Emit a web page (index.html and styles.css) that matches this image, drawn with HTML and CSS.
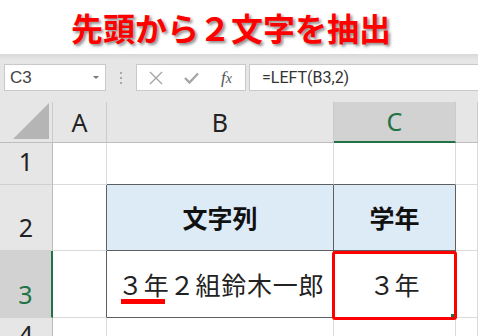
FILE: index.html
```html
<!DOCTYPE html>
<html lang="ja">
<head>
    <meta charset="UTF-8">
    <meta name="viewport" content="width=device-width, initial-scale=1.0">
    <title>先頭から２文字を抽出</title>
    <link rel="stylesheet" href="styles.css">
</head>
<body>
    <h1 class="title">先頭から２文字を抽出</h1>

    <div class="formula-bar">
        <div class="name-box">
            <span>C3</span>
            <span class="arrow"></span>
        </div>
        <div class="grip">
            <svg width="4" height="14" viewBox="0 0 4 14">
                <rect x="1" y="1" width="2" height="2" fill="#a8a8a8"/>
                <rect x="1" y="6" width="2" height="2" fill="#a8a8a8"/>
                <rect x="1" y="11" width="2" height="2" fill="#a8a8a8"/>
            </svg>
        </div>
        <div class="fx-box">
            <svg class="icon-cancel" width="14" height="14" viewBox="0 0 14 14">
                <path d="M1 1 L13 13 M13 1 L1 13" stroke="#a6a6a6" stroke-width="1.4" fill="none"/>
            </svg>
            <svg class="icon-ok" width="15" height="12" viewBox="0 0 15 12">
                <path d="M1 6 L5.5 10.5 L14 1.5" stroke="#a6a6a6" stroke-width="2.4" fill="none"/>
            </svg>
            <span class="fx"><i>f</i><i class="x">x</i></span>
        </div>
        <div class="formula-input">=LEFT(B3,2)</div>
    </div>

    <div class="sheet">
        <!-- header row -->
        <div class="cell corner"><span class="corner-tri"></span></div>
        <div class="cell col-head">A</div>
        <div class="cell col-head">B</div>
        <div class="cell col-head active">C</div>
        <div class="cell col-head"></div>

        <!-- row 1 -->
        <div class="cell row-head">1</div>
        <div class="cell"></div>
        <div class="cell edge-bottom"></div>
        <div class="cell edge-bottom"></div>
        <div class="cell"></div>

        <!-- row 2 -->
        <div class="cell row-head">2</div>
        <div class="cell edge-right"></div>
        <div class="cell table-head">文字列</div>
        <div class="cell table-head">学年</div>
        <div class="cell"></div>

        <!-- row 3 -->
        <div class="cell row-head active">3</div>
        <div class="cell edge-right"></div>
        <div class="cell table-cell left"><span class="mark">３年</span>２組鈴木一郎</div>
        <div class="cell table-cell selected">３年<span class="selection"><span class="fill-handle"></span></span></div>
        <div class="cell"></div>

        <!-- row 4 -->
        <div class="cell row-head">4</div>
        <div class="cell"></div>
        <div class="cell"></div>
        <div class="cell"></div>
        <div class="cell"></div>
    </div>
</body>
</html>
```

FILE: styles.css
```css
body {
    margin: 0;
    width: 478px;
    height: 336px;
    overflow: hidden;
    background-color: #fff;
    font-family: "Noto Sans", "Noto Sans CJK JP", sans-serif;
    color: #222;
}

.title {
    margin: 0;
    height: 54px;
    padding-right: 16px;
    box-sizing: border-box;
    display: flex;
    align-items: center;
    justify-content: center;
    font: bold 32px/1 "Noto Sans CJK JP", sans-serif;
    color: #ff0000;
    text-shadow: 2px 2px 3px rgba(0, 0, 0, 0.45);
}

/* formula bar */
.formula-bar {
    height: 48px;
    padding-top: 10px;
    box-sizing: border-box;
    display: flex;
    align-items: flex-start;
    background: linear-gradient(#d8d8d8, #e6e6e6 6px);
}
.name-box, .fx-box, .formula-input {
    height: 27px;
    box-sizing: border-box;
    border: 1px solid #c9c9c9;
    background-color: #fff;
    display: flex;
    align-items: center;
}
.name-box {
    margin-left: 4px;
    width: 102px;
    padding: 0 6px 0 5px;
    justify-content: space-between;
    font: 17px "Liberation Sans", sans-serif;
    color: #444;
}
.arrow {
    width: 0;
    height: 0;
    border-left: 3px solid transparent;
    border-right: 3px solid transparent;
    border-top: 3px solid #777;
}
.grip {
    width: 30px;
    height: 27px;
    display: flex;
    align-items: center;
    justify-content: center;
}
.fx-box {
    width: 110px;
}
.icon-cancel {
    margin-left: 12px;
}
.icon-ok {
    margin-left: 21px;
}
.fx {
    margin-left: 22px;
    font: italic 17px "Liberation Serif", serif;
    color: #555;
}
.fx .x {
    font-size: 14px;
}
.formula-input {
    margin-left: 3px;
    flex: 1;
    margin-right: -4px;
    padding-left: 12px;
    font: 16px Roboto, sans-serif;
    color: #333;
}

/* sheet grid */
.sheet {
    display: grid;
    grid-template-columns: 53px 54px 227px 122px 1fr;
    grid-template-rows: 41px 42px 66px 67px 40px;
    background-color: #fff;
}
.cell {
    box-sizing: border-box;
    border-right: 1px solid #dadada;
    border-bottom: 1px solid #dadada;
    display: flex;
    align-items: center;
    justify-content: center;
    font-size: 25px;
    line-height: 1;
}
.corner, .col-head {
    background-color: #e6e6e6;
    border-right-color: #cbcbcb;
    border-bottom-color: #bdbdbd;
}
.corner {
    position: relative;
}
.corner-tri {
    position: absolute;
    right: 3px;
    bottom: 3px;
    width: 0;
    height: 0;
    border-left: 36px solid transparent;
    border-bottom: 36px solid #b5b5b5;
}
.col-head.active {
    background-color: #d2d2d2;
    color: #217346;
    border-bottom: 2px solid #217346;
}
.row-head {
    background-color: #e6e6e6;
    border-right-color: #bdbdbd;
    border-bottom-color: #d0d0d0;
    align-items: flex-end;
    padding-bottom: 10px;
}
.row-head.active {
    background-color: #d2d2d2;
    color: #217346;
    border-right: 2px solid #217346;
}

/* the little table B2:C3 */
.edge-bottom {
    border-bottom-color: #5f5f5f;
}
.edge-right {
    border-right-color: #5f5f5f;
}
.table-head, .table-cell {
    border-right-color: #5f5f5f;
    border-bottom-color: #5f5f5f;
    font-family: "Noto Sans CJK JP", sans-serif;
}
.table-head {
    background-color: #ddebf7;
    font-weight: bold;
    color: #111;
}
.table-cell {
    color: #222;
}
.table-cell.left {
    justify-content: flex-start;
    padding-left: 11px;
    letter-spacing: 0.8px;
}
.mark {
    position: relative;
}
.mark::after {
    content: "";
    position: absolute;
    left: 3px;
    width: 44px;
    bottom: -7px;
    height: 5px;
    background-color: #ff0000;
}
.selected {
    position: relative;
}
.selection {
    position: absolute;
    top: 0;
    left: -2px;
    right: -2px;
    bottom: -3px;
    border: 3px solid #ff0000;
    border-radius: 3px;
}
.fill-handle {
    position: absolute;
    right: 0;
    bottom: 0;
    width: 3px;
    height: 3px;
    background-color: #217346;
}
```
